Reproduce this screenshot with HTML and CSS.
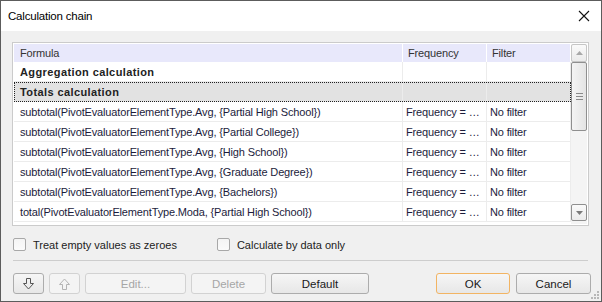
FILE: index.html
```html
<!DOCTYPE html>
<html lang="en">
  <head>
    <title>Calculation chain</title>
    <link rel="stylesheet" href="styles.css">
  </head>
  <body>
    <div class="dialog">
      <div class="titlebar">
        <span class="title">Calculation chain</span>
        <svg class="close" width="12" height="12" viewBox="0 0 12 12">
          <path d="M1 1 L11 11 M11 1 L1 11" stroke="#111" stroke-width="1.1" fill="none" />
        </svg>
      </div>

      <div class="content">
        <div class="grid">
          <div class="grid-main">
            <div class="row head">
              <div class="cell c-formula">Formula</div>
              <div class="cell c-freq">Frequency</div>
              <div class="cell c-filter">Filter</div>
            </div>
            <div class="row group">
              <div class="cell c-formula">Aggregation calculation</div>
              <div class="cell c-freq"></div>
              <div class="cell c-filter"></div>
            </div>
            <div class="row group selected">
              <div class="cell c-formula">Totals calculation</div>
              <div class="cell c-freq"></div>
              <div class="cell c-filter"></div>
            </div>
            <div class="row">
              <div class="cell c-formula">subtotal(PivotEvaluatorElementType.Avg, {Partial High School})</div>
              <div class="cell c-freq">Frequency = …</div>
              <div class="cell c-filter">No filter</div>
            </div>
            <div class="row">
              <div class="cell c-formula">subtotal(PivotEvaluatorElementType.Avg, {Partial College})</div>
              <div class="cell c-freq">Frequency = …</div>
              <div class="cell c-filter">No filter</div>
            </div>
            <div class="row">
              <div class="cell c-formula">subtotal(PivotEvaluatorElementType.Avg, {High School})</div>
              <div class="cell c-freq">Frequency = …</div>
              <div class="cell c-filter">No filter</div>
            </div>
            <div class="row">
              <div class="cell c-formula">subtotal(PivotEvaluatorElementType.Avg, {Graduate Degree})</div>
              <div class="cell c-freq">Frequency = …</div>
              <div class="cell c-filter">No filter</div>
            </div>
            <div class="row">
              <div class="cell c-formula">subtotal(PivotEvaluatorElementType.Avg, {Bachelors})</div>
              <div class="cell c-freq">Frequency = …</div>
              <div class="cell c-filter">No filter</div>
            </div>
            <div class="row">
              <div class="cell c-formula">total(PivotEvaluatorElementType.Moda, {Partial High School})</div>
              <div class="cell c-freq">Frequency = …</div>
              <div class="cell c-filter">No filter</div>
            </div>
          </div>

          <div class="scrollbar">
            <div class="sb-btn sb-up">
              <svg width="7" height="4" viewBox="0 0 7 4"><path d="M0 4 L3.5 0 L7 4 Z" fill="#a8a8a8" /></svg>
            </div>
            <div class="sb-track">
              <div class="sb-thumb">
                <svg width="7" height="7" viewBox="0 0 7 7">
                  <path d="M0 0.5 H7 M0 3.5 H7 M0 6.5 H7" stroke="#8a8a8a" stroke-width="1" />
                </svg>
              </div>
            </div>
            <div class="sb-btn sb-down">
              <svg width="7" height="4" viewBox="0 0 7 4"><path d="M0 0 L3.5 4 L7 0 Z" fill="#7a7a7a" /></svg>
            </div>
          </div>
        </div>

        <div class="options">
          <label class="check"><span class="box"></span>Treat empty values as zeroes</label>
          <label class="check second"><span class="box"></span>Calculate by data only</label>
        </div>

        <div class="separator"></div>

        <div class="buttons">
          <button class="btn btn-icon">
            <svg width="11" height="12" viewBox="0 0 11 12">
              <path d="M3.5 0.5 H7.5 V5.5 H10.5 L5.5 11 L0.5 5.5 H3.5 Z" fill="none" stroke="#555" />
            </svg>
          </button>
          <button class="btn btn-icon" disabled>
            <svg width="11" height="12" viewBox="0 0 11 12">
              <path d="M3.5 11.5 H7.5 V6.5 H10.5 L5.5 1 L0.5 6.5 H3.5 Z" fill="none" stroke="#b4b4b4" />
            </svg>
          </button>
          <button class="btn btn-edit" disabled>Edit...</button>
          <button class="btn btn-delete" disabled>Delete</button>
          <button class="btn btn-default">Default</button>
          <span class="spacer"></span>
          <button class="btn btn-ok">OK</button>
          <button class="btn btn-cancel">Cancel</button>
        </div>
      </div>

      <svg class="grip" width="8" height="8" viewBox="0 0 8 8">
        <rect x="6" y="0" width="2" height="2" fill="#b8b8b8" />
        <rect x="3" y="3" width="2" height="2" fill="#b8b8b8" />
        <rect x="6" y="3" width="2" height="2" fill="#b8b8b8" />
        <rect x="0" y="6" width="2" height="2" fill="#b8b8b8" />
        <rect x="3" y="6" width="2" height="2" fill="#b8b8b8" />
        <rect x="6" y="6" width="2" height="2" fill="#b8b8b8" />
      </svg>
    </div>
  </body>
</html>
```

FILE: styles.css
```css
/* dialog frame */
body {
  margin: 0;
  font-family: "Liberation Sans", Arial, sans-serif;
  font-size: 11px;
  background-color: #f0f0f0;
}

.dialog {
  position: relative;
  box-sizing: border-box;
  width: 602px;
  height: 302px;
  border: 1px solid #5c5c5c;
  background-color: #f0f0f0;
}

.titlebar {
  display: flex;
  align-items: center;
  justify-content: space-between;
  height: 30px;
  padding: 0 11px 0 7px;
  background-color: #fff;
}

.title {
  font-size: 11.5px;
  letter-spacing: -0.2px;
  color: #000;
}

.content {
  padding: 11px 12px 0 11px;
}

/* table */
.grid {
  display: flex;
  box-sizing: border-box;
  height: 184px;
  border: 1px solid #cbcbcb;
  padding: 1px;
  background-color: #fff;
}

.grid-main {
  width: 557px;
  overflow: hidden;
}

.row {
  display: grid;
  grid-template-columns: 389px 84px 84px;
  height: 20px;
}

.cell {
  box-sizing: border-box;
  padding: 0 3px;
  line-height: 20px;
  white-space: nowrap;
  overflow: hidden;
  color: #1c1c3c;
  letter-spacing: -0.15px;
  border-right: 1px solid #ececec;
  border-bottom: 1px solid #ececec;
}

.cell.c-formula {
  padding-left: 6px;
}

.row.head {
  height: 18px;
  background-color: #e8e8fb;
}

.row.head .cell {
  line-height: 18px;
  color: #333;
  padding-left: 5px;
  border-bottom: none;
  border-right: 1px solid #fff;
}

.row.head .c-formula {
  padding-left: 6px;
}

.row.group .cell {
  font-weight: bold;
  letter-spacing: 0.4px;
  color: #222;
}

.row.selected {
  position: relative;
  background-color: #e2e2e2;
}

.row.selected::after {
  content: "";
  position: absolute;
  top: 0;
  left: 0;
  right: 0;
  bottom: 0;
  border: 1px dotted #222;
}

/* scrollbar */
.scrollbar {
  display: flex;
  flex-direction: column;
  width: 16px;
  background-color: #f4f4f4;
}

.sb-btn {
  display: flex;
  align-items: center;
  justify-content: center;
  box-sizing: border-box;
  height: 18px;
  border: 1px solid #c6c6c6;
  border-radius: 2px;
  background: linear-gradient(#fafafa, #ebebeb);
}

.sb-down {
  height: 17px;
  margin-bottom: 3px;
  border-color: #8f8f8f;
}

.sb-track {
  flex: 1;
}

.sb-thumb {
  display: flex;
  align-items: center;
  justify-content: center;
  box-sizing: border-box;
  height: 69px;
  border: 1px solid #8f8f8f;
  border-radius: 2px;
  background: linear-gradient(to right, #f4f4f4, #e4e4e4);
}

/* options */
.options {
  display: flex;
  align-items: center;
  height: 13px;
  margin-top: 12px;
  padding-left: 1px;
  font-size: 11px;
  color: #222;
}

.check {
  display: flex;
  align-items: center;
  gap: 7px;
}

.check.second {
  margin-left: 40px;
}

.box {
  box-sizing: border-box;
  width: 13px;
  height: 13px;
  border: 1px solid #a8a8a8;
  border-radius: 2px;
  background: linear-gradient(#f4f4f4, #fbfbfb);
}

.separator {
  height: 1px;
  margin: 9px 1px 0 1px;
  background-color: #cdcdcd;
}

/* buttons */
.buttons {
  display: flex;
  gap: 5px;
  margin-top: 12px;
  margin-right: -2px;
  padding-left: 1px;
}

.btn {
  display: flex;
  align-items: center;
  justify-content: center;
  box-sizing: border-box;
  height: 21px;
  padding: 0;
  border: 1px solid #acacac;
  border-radius: 3px;
  background: linear-gradient(#f6f6f6, #e7e7e7);
  font-family: "Liberation Sans", Arial, sans-serif;
  font-size: 11.5px;
  color: #1a1a1a;
}

.btn:disabled {
  border-color: #d2d2d2;
  background: #f4f4f4;
  color: #a6a6a6;
}

.btn-icon {
  width: 31px;
}

.btn-edit {
  width: 101px;
}

.btn-delete {
  width: 75px;
}

.btn-default {
  width: 98px;
}

.spacer {
  flex: 1;
}

.btn-ok {
  width: 74px;
  border-color: #f2b463;
}

.btn-cancel {
  width: 75px;
  margin-left: 1px;
}

.grip {
  position: absolute;
  right: 2px;
  bottom: 2px;
}
```
